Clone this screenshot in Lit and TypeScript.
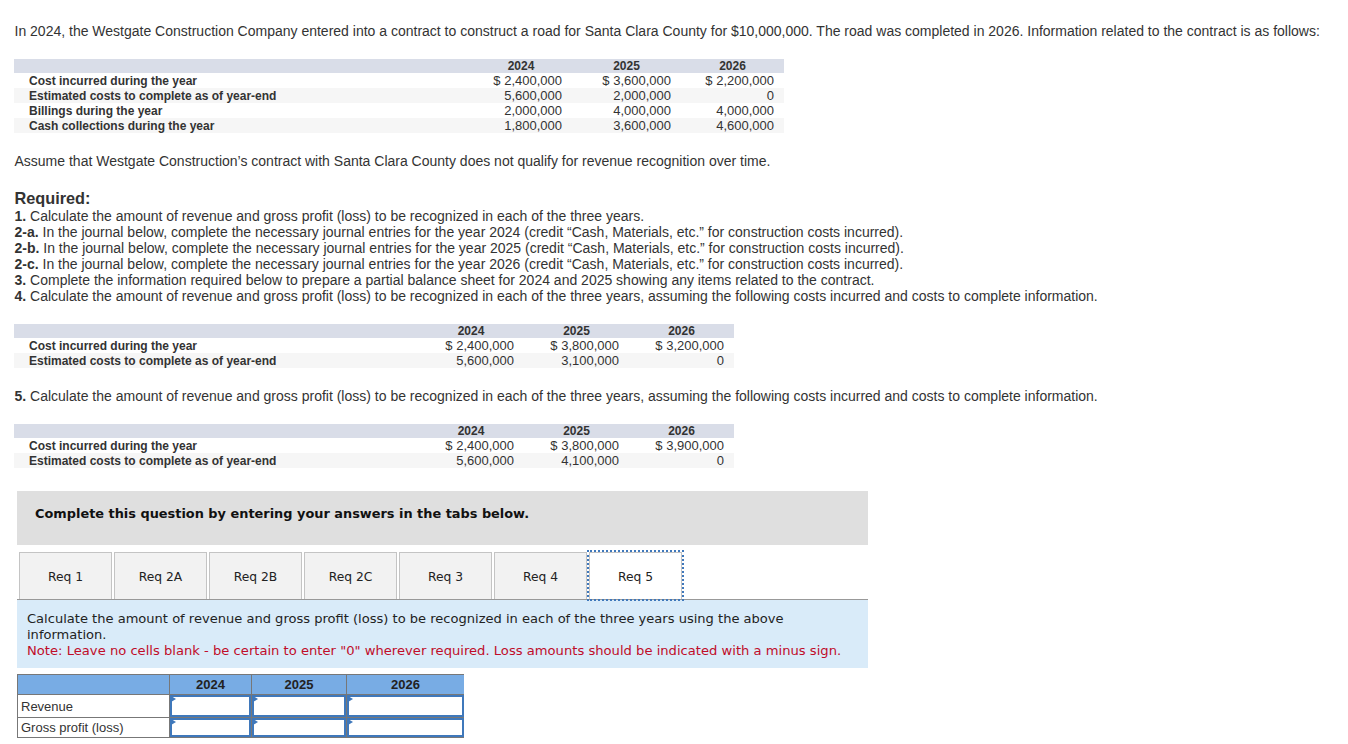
import { LitElement, html, css } from 'lit';
import { customElement } from 'lit/decorators.js';

const firstRows = [
  ['Cost incurred during the year', '$ 2,400,000', '$ 3,600,000', '$ 2,200,000'],
  ['Estimated costs to complete as of year-end', '5,600,000', '2,000,000', '0'],
  ['Billings during the year', '2,000,000', '4,000,000', '4,000,000'],
  ['Cash collections during the year', '1,800,000', '3,600,000', '4,600,000'],
];
const secondRows = [
  ['Cost incurred during the year', '$ 2,400,000', '$ 3,800,000', '$ 3,200,000'],
  ['Estimated costs to complete as of year-end', '5,600,000', '3,100,000', '0'],
];
const thirdRows = [
  ['Cost incurred during the year', '$ 2,400,000', '$ 3,800,000', '$ 3,900,000'],
  ['Estimated costs to complete as of year-end', '5,600,000', '4,100,000', '0'],
];
const years = ['2024', '2025', '2026'];
const tabs = ['Req 1', 'Req 2A', 'Req 2B', 'Req 2C', 'Req 3', 'Req 4', 'Req 5'];
const steps: [string, string][] = [
  ['1.', 'Calculate the amount of revenue and gross profit (loss) to be recognized in each of the three years.'],
  ['2-a.', 'In the journal below, complete the necessary journal entries for the year 2024 (credit “Cash, Materials, etc.” for construction costs incurred).'],
  ['2-b.', 'In the journal below, complete the necessary journal entries for the year 2025 (credit “Cash, Materials, etc.” for construction costs incurred).'],
  ['2-c.', 'In the journal below, complete the necessary journal entries for the year 2026 (credit “Cash, Materials, etc.” for construction costs incurred).'],
  ['3.', 'Complete the information required below to prepare a partial balance sheet for 2024 and 2025 showing any items related to the contract.'],
  ['4.', 'Calculate the amount of revenue and gross profit (loss) to be recognized in each of the three years, assuming the following costs incurred and costs to complete information.'],
];

@customElement('app-root')
export class AppRoot extends LitElement {
  static styles = css`
    :host {
      display: block;
      width: 1348px;
      height: 744px;
      overflow: hidden;
      background: #fff;
      font-family: 'Liberation Sans', Arial, sans-serif;
      font-size: 14px;
      color: #333;
    }

    .page { padding: 23px 0 0 14.5px; }

    p { margin: 0; line-height: 16px; }

    .data {
      display: grid;
      margin-left: -0.5px;
      font-size: 13px;
      line-height: 17px;
    }
    .data.wide { grid-template-columns: 456px 102px 109px 103px; width: 770px; margin-top: 20px; }
    .data.narrow { grid-template-columns: 404px 106px 105px 105px; width: 720px; }

    .data .head { background: #d9dde8; height: 14px; line-height: 14px; text-align: center; font-weight: bold; font-size: 12px; }
    .data .label { padding-left: 15px; font-weight: bold; font-size: 12px; height: 15px; }
    .data .num { text-align: right; padding-right: 10px; height: 15px; line-height: 15px; }
    .data .alt { background: #f6f6f6; }

    .assume { margin-top: 20px; }

    .required { margin-top: 20px; font-size: 16.3px; font-weight: bold; line-height: 18px; }
    .steps { margin-top: 1px; }

    .second { margin-top: 20px; }
    .fifth { margin-top: 20px; }
    .third { margin-top: 20px; }

    .work {
      margin: 23px 0 0 2.5px;
      width: 851px;
      font-family: 'DejaVu Sans', Verdana, sans-serif;
      font-size: 12.3px;
      color: #222;
    }

    .banner {
      height: 54px;
      background: #dfdfdf;
      display: flex;
      align-items: center;
      padding: 0 0 10px 18px;
      font-size: 12.9px;
      font-weight: bold;
      color: #111;
      box-sizing: border-box;
    }

    .tabs {
      display: flex;
      gap: 2px;
      height: 47px;
      margin-top: 7px;
      padding-left: 2px;
      border-bottom: 1px solid #999;
    }
    .tab {
      width: 93px;
      height: 47px;
      box-sizing: border-box;
      padding-top: 2px;
      background: #f2f2f2;
      border: 1px solid #c4c4c4;
      border-bottom: none;
      display: flex;
      align-items: center;
      justify-content: center;
    }
    .tab.active {
      background: #fff;
      outline: 2px dotted #3f78bb;
      outline-offset: 0;
      position: relative;
    }

    .note {
      background: #d9ebf9;
      height: 68px;
      box-sizing: border-box;
      padding: 11px 10px 0;
      font-size: 13.05px;
      line-height: 16px;
    }
    .note .warn { color: #c00d2a; font-size: 13.13px; }

    .answers {
      margin-top: 6px;
      display: grid;
      grid-template-columns: 152px 82px 95px 118px;
      grid-template-rows: 20px 23px 20px;
      width: 447px;
      border-right: 1px solid #777;
      border-bottom: 1px solid #777;
      box-sizing: border-box;
      font-family: 'Liberation Sans', Arial, sans-serif;
      font-size: 13px;
    }
    .answers > div {
      border-top: 1px solid #777;
      border-left: 1px solid #777;
      box-sizing: border-box;
    }
    .answers .top {
      background: #78ace4;
      text-align: center;
      font-weight: bold;
      line-height: 19px;
      color: #222;
    }
    .answers .name { padding-left: 3px; display: flex; align-items: center; color: #333; }
    .answers .cell { position: relative; padding: 0; }
    .answers .box {
      height: 100%;
      box-sizing: border-box;
      border: 2px solid #3f78bb;
      background: #fff;
    }
    .answers .cell::after {
      content: '';
      position: absolute;
      left: 1px;
      top: 1px;
      border-left: 5px solid #3f78bb;
      border-top: 3px solid transparent;
      border-bottom: 3px solid transparent;
    }
  `;

  renderData(rows: string[][], kind: string, extra: string) {
    return html`
      <div class="data ${kind} ${extra}">
        <div class="head"></div>
        ${years.map(y => html`<div class="head">${y}</div>`)}
        ${rows.map((r, i) => html`
          <div class="label ${i % 2 ? 'alt' : ''}">${r[0]}</div>
          ${r.slice(1).map(v => html`<div class="num ${i % 2 ? 'alt' : ''}">${v}</div>`)}
        `)}
      </div>
    `;
  }

  render() {
    return html`
      <div class="page">
        <p>In 2024, the Westgate Construction Company entered into a contract to construct a road for Santa Clara County for $10,000,000. The road was completed in 2026. Information related to the contract is as follows:</p>
        ${this.renderData(firstRows, 'wide', '')}
        <p class="assume">Assume that Westgate Construction’s contract with Santa Clara County does not qualify for revenue recognition over time.</p>
        <div class="required">Required:</div>
        <div class="steps">
          ${steps.map(([n, t]) => html`<p><b>${n}</b> ${t}</p>`)}
        </div>
        ${this.renderData(secondRows, 'narrow', 'second')}
        <p class="fifth"><b>5.</b> Calculate the amount of revenue and gross profit (loss) to be recognized in each of the three years, assuming the following costs incurred and costs to complete information.</p>
        ${this.renderData(thirdRows, 'narrow', 'third')}
        <div class="work">
          <div class="banner">Complete this question by entering your answers in the tabs below.</div>
          <div class="tabs">
            ${tabs.map((t, i) => html`<div class="tab ${i === 6 ? 'active' : ''}">${t}</div>`)}
          </div>
          <div class="note">
            Calculate the amount of revenue and gross profit (loss) to be recognized in each of the three years using the above information.<br />
            <span class="warn">Note: Leave no cells blank - be certain to enter "0" wherever required. Loss amounts should be indicated with a minus sign.</span>
          </div>
          <div class="answers">
            <div class="top"></div>
            ${years.map(y => html`<div class="top">${y}</div>`)}
            ${['Revenue', 'Gross profit (loss)'].map(n => html`
              <div class="name">${n}</div>
              ${years.map(() => html`<div class="cell"><div class="box"></div></div>`)}
            `)}
          </div>
        </div>
      </div>
    `;
  }
}
